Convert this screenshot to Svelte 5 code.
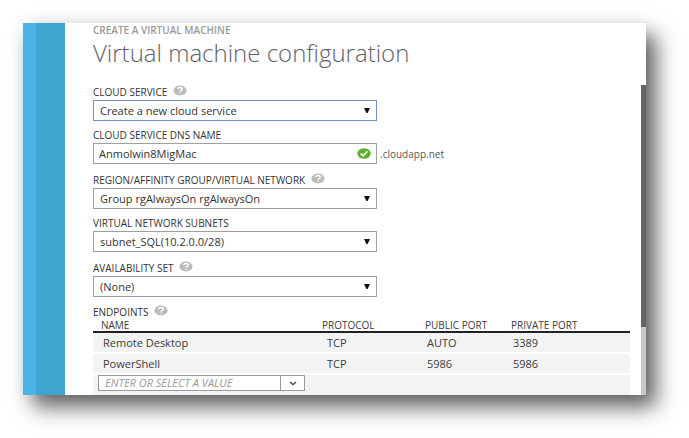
<script>
  let dnsName = $state('Anmolwin8MigMac');
  let endpointName = $state('');

  const endpoints = [
    { name: 'Remote Desktop', protocol: 'TCP', publicPort: 'AUTO', privatePort: '3389' },
    { name: 'PowerShell', protocol: 'TCP', publicPort: '5986', privatePort: '5986' }
  ];
</script>

{#snippet help(topic)}
  <button type="button" class="help" aria-label={`Help: ${topic}`}>
    <svg viewBox="0 0 14 11" width="14" height="11" aria-hidden="true">
      <ellipse cx="7" cy="5.5" rx="6.6" ry="5.1" fill="#bcbcbc" />
      <path d="M4.8 4.1C4.9 1.9 9.3 1.9 9.3 4.1C9.3 5.4 7.1 5.3 7.1 6.7M7.1 7.7V8.8" fill="none" stroke="#fff" stroke-width="1.4" />
    </svg>
  </button>
{/snippet}

{#snippet dropdown(id, label, value, hasHelp, active)}
  <div class="field">
    <div class="caption" class:with-help={hasHelp}>
      <label for={id}>{label}</label>
      {#if hasHelp}{@render help(label)}{/if}
    </div>
    <div class="control">
      <select {id} class:active>
        <option>{value}</option>
      </select>
      <svg class="arrow" viewBox="0 0 6 5" width="6" height="5" aria-hidden="true">
        <path d="M0 0H6L3.6 5H2.4Z" fill="#111" />
      </svg>
    </div>
  </div>
{/snippet}

<main class="dialog">
  <div class="edge"></div>
  <div class="band"></div>
  <form class="content">
    <p class="eyebrow">CREATE A VIRTUAL MACHINE</p>
    <h1>Virtual machine configuration</h1>

    <div class="fields">
      {@render dropdown('service', 'CLOUD SERVICE', 'Create a new cloud service', true, true)}

      <div class="field">
        <div class="caption"><label for="dns">CLOUD SERVICE DNS NAME</label></div>
        <div class="dns-row">
          <div class="control">
            <input id="dns" type="text" bind:value={dnsName} spellcheck="false" />
            <svg class="valid" viewBox="0 0 14 11" width="14" height="11" aria-hidden="true">
              <ellipse cx="7" cy="5.5" rx="6.7" ry="5.2" fill="#5eae2d" />
              <path d="M3.7 5.5L6.1 7.8L10.5 3.4" fill="none" stroke="#fff" stroke-width="1.8" />
            </svg>
          </div>
          <span class="suffix">.cloudapp.net</span>
        </div>
      </div>

      {@render dropdown('region', 'REGION/AFFINITY GROUP/VIRTUAL NETWORK', 'Group rgAlwaysOn rgAlwaysOn', true, false)}
      {@render dropdown('subnets', 'VIRTUAL NETWORK SUBNETS', 'subnet_SQL(10.2.0.0/28)', false, false)}
      {@render dropdown('availability', 'AVAILABILITY SET', '(None)', true, false)}
    </div>

    <div class="caption with-help endpoints-title">
      <span id="endpoints">ENDPOINTS</span>
      {@render help('ENDPOINTS')}
    </div>
    <table aria-labelledby="endpoints">
      <thead>
        <tr>
          <th class="name">NAME</th>
          <th class="protocol">PROTOCOL</th>
          <th class="public">PUBLIC PORT</th>
          <th>PRIVATE PORT</th>
        </tr>
      </thead>
      <tbody>
        {#each endpoints as row}
          <tr>
            <td>{row.name}</td>
            <td class="wide">{row.protocol}</td>
            <td>{row.publicPort}</td>
            <td>{row.privatePort}</td>
          </tr>
        {/each}
        <tr>
          <td colspan="4" class="new">
            <div class="combo">
              <input type="text" bind:value={endpointName} placeholder="ENTER OR SELECT A VALUE" aria-label="Endpoint name" />
              <button type="button" aria-label="Show endpoint names">
                <svg viewBox="0 0 8 5" width="8" height="5" aria-hidden="true">
                  <path d="M1 1L4 3.6L7 1" fill="none" stroke="#444" stroke-width="1.3" />
                </svg>
              </button>
            </div>
          </td>
        </tr>
      </tbody>
    </table>
  </form>
  <div class="scrollbar"><div class="thumb"></div></div>
</main>

<style>
  :global(body) {
    background: #fff;
  }

  .dialog {
    display: flex;
    margin: 23px 43px 43px 23px;
    background: #fff;
    color: #3c3c3c;
    font-family: 'Open Sans', 'Noto Sans', sans-serif;
    font-size: 11px;
    box-shadow:
      10px 12px 20px rgba(0, 0, 0, 0.62),
      0 0 14px rgba(0, 0, 0, 0.06);
  }

  .edge {
    flex: 0 0 13px;
    background: #4ab5e4;
  }

  .band {
    flex: 0 0 29px;
    background: #3fa5cf;
  }

  .content {
    flex: 1;
    min-width: 0;
    padding: 0 11px 0 28px;
  }

  .eyebrow {
    margin: 0;
    color: #999;
    font-size: 10px;
    font-weight: 600;
    line-height: 14px;
  }

  h1 {
    margin: 0;
    color: #62626a;
    font-size: 24px;
    font-weight: 300;
    line-height: 32px;
  }

  .fields {
    display: flex;
    flex-direction: column;
    gap: 7px;
    margin-top: 14px;
  }

  .caption {
    display: flex;
    align-items: flex-end;
    gap: 6px;
    height: 15px;
    padding-bottom: 1px;
    box-sizing: border-box;
    color: #333;
    font-size: 10px;
    line-height: 14px;
  }

  .caption.with-help {
    height: 17px;
  }

  .help {
    display: flex;
    align-self: flex-start;
    margin: 0;
    padding: 2px 0 0;
    border: 0;
    background: none;
  }

  .control {
    position: relative;
    width: 284px;
  }

  select,
  .control input {
    display: block;
    width: 100%;
    height: 21px;
    box-sizing: border-box;
    margin: 0;
    padding: 0 6px;
    border: 1px solid #a0a0a0;
    border-radius: 0;
    appearance: none;
    background: #fff;
    color: #333;
    font: inherit;
    outline: none;
  }

  .control input {
    padding: 0 26px 0 5px;
  }

  select.active {
    border-color: #6f8fc9;
  }

  .arrow {
    position: absolute;
    top: 8px;
    right: 7px;
  }

  .valid {
    position: absolute;
    top: 5px;
    right: 6px;
  }

  .dns-row {
    display: flex;
    align-items: center;
    gap: 3px;
  }

  .suffix {
    color: #555;
    font-size: 10px;
  }

  .endpoints-title {
    margin-top: 6px;
  }

  table {
    width: 100%;
    border-collapse: collapse;
    table-layout: fixed;
  }

  th {
    height: 11px;
    padding: 0 0 0 8px;
    border-bottom: 2px solid #222;
    font-size: 10px;
    font-weight: 400;
    line-height: 11px;
    text-align: left;
    white-space: nowrap;
  }

  .name {
    width: 213px;
  }

  .protocol {
    width: 95px;
  }

  .public {
    width: 78px;
  }

  td {
    height: 19px;
    padding: 0 0 0 10px;
    border-bottom: 2px solid #fff;
    background: #f3f3f3;
    line-height: 18px;
  }

  td.wide {
    padding-left: 13px;
  }

  td.new {
    height: 20px;
    padding: 0 0 0 5px;
    border-bottom: 0;
    vertical-align: top;
  }

  .combo {
    display: flex;
    width: 207px;
    height: 16px;
    box-sizing: border-box;
    border: 1px solid #999;
    background: #fff;
  }

  .combo input {
    flex: 1;
    min-width: 0;
    padding: 0 6px;
    border: 0;
    background: none;
    color: #333;
    font: inherit;
    outline: none;
  }

  .combo input::placeholder {
    color: #999;
    font-style: italic;
    opacity: 1;
  }

  .combo button {
    display: flex;
    flex: 0 0 24px;
    align-items: center;
    justify-content: center;
    padding: 0;
    border: 0;
    border-left: 1px solid #999;
    background: #fff;
  }

  .scrollbar {
    display: flex;
    flex: 0 0 5px;
    flex-direction: column;
    padding-top: 62px;
    background: linear-gradient(#fff 62px, #c8c8c8 62px);
  }

  .thumb {
    flex: 0 0 78%;
    background: #646464;
  }
</style>
